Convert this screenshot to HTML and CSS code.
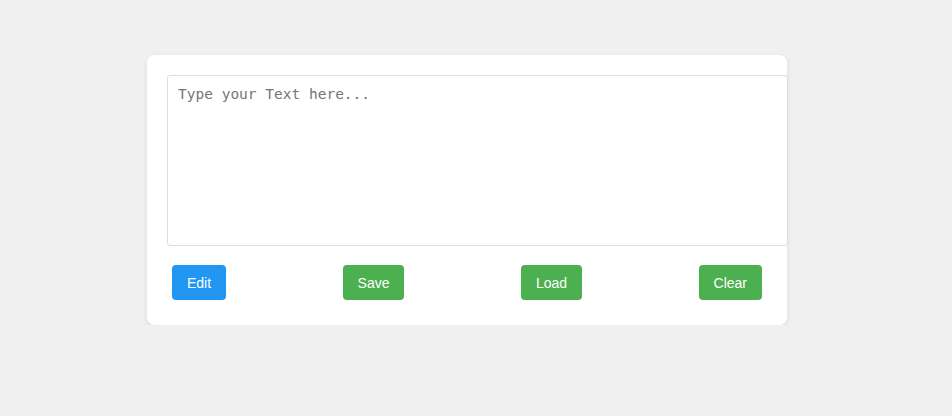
FILE: index.html
```html
<!DOCTYPE html>
<html>
<head>
<meta charset="utf-8">
<link rel="stylesheet" href="styles.css">
</head>
<body>
<div class="card">
  <textarea class="editor" placeholder="Type your Text here..."></textarea>
  <div class="actions">
    <button class="btn btn-blue">Edit</button>
    <button class="btn btn-green">Save</button>
    <button class="btn btn-green">Load</button>
    <button class="btn btn-green">Clear</button>
  </div>
</div>
</body>
</html>
```
FILE: styles.css
```css
html, body {
  margin: 0;
  padding: 0;
  background: #f0f0f0;
  font-family: "Liberation Sans", Arial, sans-serif;
}
body {
  padding: 55px 0 0 147px;
}
.card {
  width: 600px;
  padding: 20px;
  background: #fff;
  border-radius: 8px;
  box-shadow: 0 2px 6px rgba(0,0,0,0.08);
}
.editor {
  display: block;
  box-sizing: content-box;
  width: 599px;
  height: 149px;
  padding: 10px;
  border: 1px solid #ddd;
  border-radius: 3px;
  margin: 0 0 14px 0;
  font-family: "DejaVu Sans Mono", monospace;
  font-size: 14.5px;
  resize: none;
  outline: none;
  background: #fff;
}
.editor::placeholder {
  color: #757575;
}
.actions {
  display: flex;
  justify-content: space-between;
}
.btn {
  margin: 5px;
  height: 35px;
  padding: 0 15px;
  border: none;
  border-radius: 4px;
  color: #fff;
  font-family: "Liberation Sans", Arial, sans-serif;
  font-size: 14px;
  cursor: pointer;
}
.btn-blue { background: #2196f3; }
.btn-green { background: #4caf50; }
```
